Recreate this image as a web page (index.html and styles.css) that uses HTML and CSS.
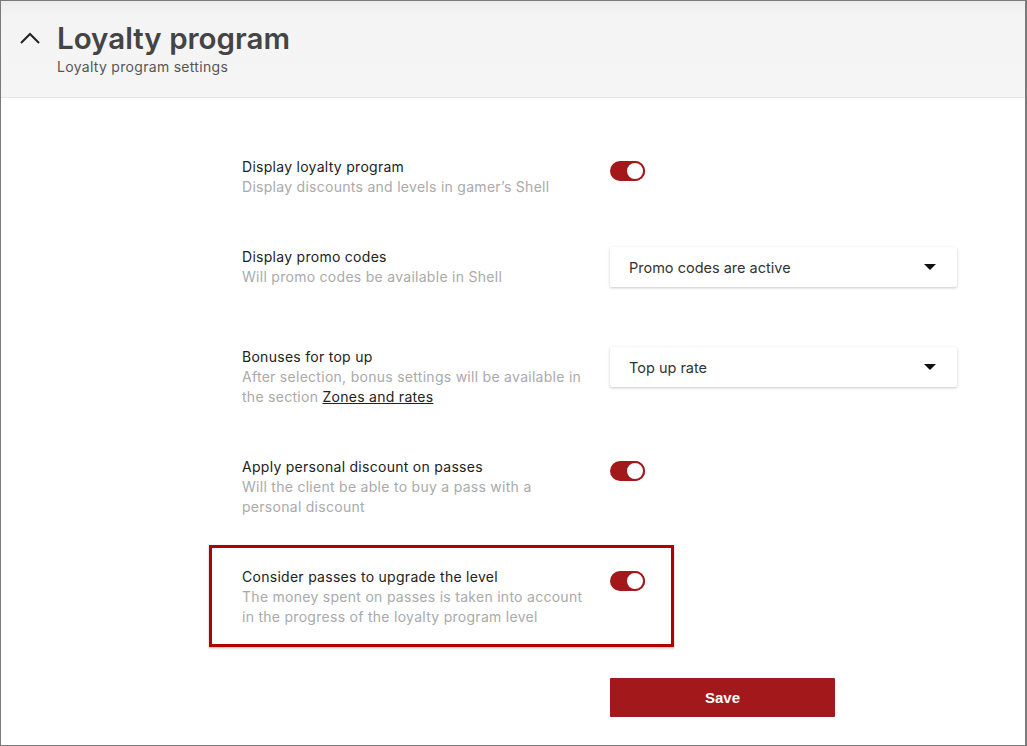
FILE: index.html
```html
<!DOCTYPE html>
<html lang="en">
<head>
<meta charset="utf-8">
<title>Loyalty program</title>
<link rel="stylesheet" href="styles.css">
</head>
<body>
<div class="frame">
  <header class="head">
    <svg class="chev" width="22" height="14" viewBox="0 0 22 14"><path d="M2 12 L11 3 L20 12" fill="none" stroke="#222" stroke-width="2"/></svg>
    <div class="head-text">
      <h1 class="title">Loyalty program</h1>
      <div class="subtitle">Loyalty program settings</div>
    </div>
  </header>
  <main class="content">
    <div class="row r1">
      <div class="label">
        <div class="name">Display loyalty program</div>
        <div class="desc">Display discounts and levels in gamer’s Shell</div>
      </div>
      <div class="ctrl"><span class="toggle"><span class="knob"></span></span></div>
    </div>
    <div class="row r2">
      <div class="label">
        <div class="name">Display promo codes</div>
        <div class="desc">Will promo codes be available in Shell</div>
      </div>
      <div class="ctrl"><div class="select"><span>Promo codes are active</span><span class="caret"></span></div></div>
    </div>
    <div class="row r3">
      <div class="label">
        <div class="name">Bonuses for top up</div>
        <div class="desc">After selection, bonus settings will be available in the section <a class="link" href="#">Zones and rates</a></div>
      </div>
      <div class="ctrl"><div class="select"><span>Top up rate</span><span class="caret"></span></div></div>
    </div>
    <div class="row r4">
      <div class="label">
        <div class="name">Apply personal discount on passes</div>
        <div class="desc">Will the client be able to buy a pass with a personal discount</div>
      </div>
      <div class="ctrl"><span class="toggle"><span class="knob"></span></span></div>
    </div>
    <div class="row r5">
      <div class="label">
        <div class="name">Consider passes to upgrade the level</div>
        <div class="desc">The money spent on passes is taken into account in the progress of the loyalty program level</div>
      </div>
      <div class="ctrl"><span class="toggle"><span class="knob"></span></span></div>
    </div>
    <div class="actions"><button class="save">Save</button></div>
  </main>
</div>
</body>
</html>
```
FILE: styles.css
```css
* { box-sizing: border-box; }
html, body { margin: 0; padding: 0; background: #fff; }
body { font-family: Inter, "Noto Sans", sans-serif; color: #222; }
.frame {
  width: 1027px; height: 746px;
  border: 1px solid #7a7a7a;
  border-right-width: 2px;
  overflow: hidden;
}
.head {
  height: 97px;
  background: linear-gradient(#ececec 0, #f4f4f4 14px, #f5f5f5 100%);
  border-bottom: 1px solid #e6e6e6;
  display: flex;
  align-items: flex-start;
  padding: 20px 0 0 18px;
}
.chev { margin-top: 10px; margin-right: 16px; }
.title {
  margin: 0;
  font-size: 29.5px;
  line-height: 34px;
  font-weight: 600;
  color: #444;
}
.subtitle { font-size: 14px; line-height: 18px; color: #555; margin-top: 3px; letter-spacing: 0.3px; }
.content { padding: 59px 0 0 241px; }
.row {
  display: grid;
  grid-template-columns: 348px 348px;
  column-gap: 20px;
}
.name { font-size: 14px; line-height: 20px; color: #222; letter-spacing: 0.28px; }
.desc { font-size: 14px; line-height: 20px; color: #aaa; letter-spacing: 0.28px; }
.link { color: #222; text-decoration: underline; }
.r2 { margin-top: 50px; }
.r3 { margin-top: 60px; }
.r4 { margin-top: 50px; }
.r5 {
  margin-top: 28px;
  margin-left: -33px;
  width: 465px;
  border: 3px solid #b00000;
  padding: 19px 0 17px 30px;
  grid-template-columns: 348px 60px;
  box-shadow: 0 1px 2px rgba(0,0,0,0.3);
}
.ctrl { padding-top: 4px; }
.r2 .ctrl, .r3 .ctrl { padding-top: 0; }
.toggle {
  display: block;
  width: 35px; height: 20px;
  border-radius: 10px;
  background: #a3181b;
  position: relative;
}
.knob {
  position: absolute;
  right: 0; top: 0;
  width: 20px; height: 20px;
  border-radius: 50%;
  background: #fff;
  border: 2px solid #a3181b;
}
.select {
  height: 40px;
  width: 347px;
  background: #fff;
  border-radius: 2px;
  box-shadow: 0 1px 3px rgba(0,0,0,0.22);
  display: flex;
  align-items: center;
  justify-content: space-between;
  padding: 0 21px 0 19px;
  font-size: 14.5px;
  color: #333;
}
.caret {
  width: 0; height: 0;
  border-left: 6px solid transparent;
  border-right: 6px solid transparent;
  border-top: 6px solid #111;
}
.actions { padding: 31px 0 0 368px; }
.save {
  width: 225px; height: 39px;
  background: #a3181b;
  border: none;
  border-radius: 1px;
  color: #fff;
  font-family: "Liberation Sans", Arial, sans-serif;
  font-weight: 700;
  font-size: 15px;
}
```
